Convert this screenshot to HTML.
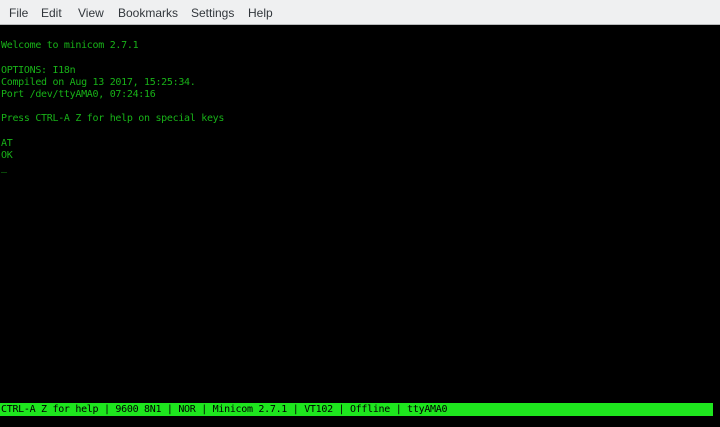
<!DOCTYPE html>
<html><head><meta charset="utf-8"><style>
html,body{margin:0;padding:0;width:720px;height:427px;overflow:hidden;background:#000;}
#menu{position:absolute;left:0;top:0;width:720px;height:24px;background:#eff0f1;border-bottom:1px solid #b8babc;font-family:"Liberation Sans","DejaVu Sans",sans-serif;font-size:12px;color:#31363b;}
#menu span{position:absolute;top:6px;}
#term{position:absolute;left:1px;top:28px;font-family:"DejaVu Sans Mono","Liberation Mono",monospace;font-size:10px;letter-spacing:-0.3px;line-height:12.2px;color:#18b218;white-space:pre;}
#bar{position:absolute;left:0;top:403px;width:713px;height:13px;background:#1ee61e;}
#bartxt{position:absolute;left:1px;top:403px;font-family:"DejaVu Sans Mono","Liberation Mono",monospace;font-size:10px;letter-spacing:-0.3px;line-height:14px;color:#000;white-space:pre;}
</style></head><body>
<div id="menu"><span style="left:9px">File</span><span style="left:41px">Edit</span><span style="left:78px">View</span><span style="left:118px">Bookmarks</span><span style="left:191px">Settings</span><span style="left:248px">Help</span></div>
<div id="term">
Welcome to minicom 2.7.1

OPTIONS: I18n
Compiled on Aug 13 2017, 15:25:34.
Port /dev/ttyAMA0, 07:24:16

Press CTRL-A Z for help on special keys

AT
OK
_</div>
<div id="bar"></div>
<div id="bartxt">CTRL-A Z for help | 9600 8N1 | NOR | Minicom 2.7.1 | VT102 | Offline | ttyAMA0</div>
</body></html>
